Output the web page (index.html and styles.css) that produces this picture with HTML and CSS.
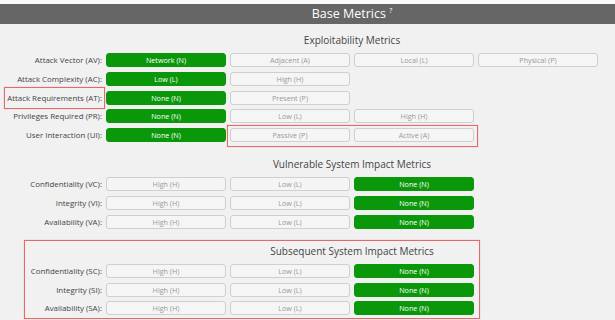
FILE: index.html
```html
<!DOCTYPE html>
<html lang="en">
<head>
  <meta charset="UTF-8" />
  <meta name="viewport" content="width=device-width, initial-scale=1.0" />
  <title>CVSS v4.0 Base Metrics</title>
  <link rel="stylesheet" href="styles.css">
</head>
<body>
  <div class="topbar"></div>
  <header class="head">
    <span class="head-title">Base Metrics <sup>?</sup></span>
  </header>

  <main class="metrics">
    <section class="group">
      <h3 class="group-title">Exploitability Metrics</h3>
      <div class="row">
        <span class="label">Attack Vector (AV):</span>
        <button class="opt on">Network (N)</button>
        <button class="opt">Adjacent (A)</button>
        <button class="opt">Local (L)</button>
        <button class="opt">Physical (P)</button>
      </div>
      <div class="row">
        <span class="label">Attack Complexity (AC):</span>
        <button class="opt on">Low (L)</button>
        <button class="opt">High (H)</button>
      </div>
      <div class="row">
        <span class="label">Attack Requirements (AT):</span>
        <button class="opt on">None (N)</button>
        <button class="opt">Present (P)</button>
      </div>
      <div class="row">
        <span class="label">Privileges Required (PR):</span>
        <button class="opt on">None (N)</button>
        <button class="opt">Low (L)</button>
        <button class="opt">High (H)</button>
      </div>
      <div class="row">
        <span class="label">User Interaction (UI):</span>
        <button class="opt on">None (N)</button>
        <button class="opt">Passive (P)</button>
        <button class="opt">Active (A)</button>
      </div>
    </section>

    <section class="group">
      <h3 class="group-title">Vulnerable System Impact Metrics</h3>
      <div class="row">
        <span class="label">Confidentiality (VC):</span>
        <button class="opt">High (H)</button>
        <button class="opt">Low (L)</button>
        <button class="opt on">None (N)</button>
      </div>
      <div class="row">
        <span class="label">Integrity (VI):</span>
        <button class="opt">High (H)</button>
        <button class="opt">Low (L)</button>
        <button class="opt on">None (N)</button>
      </div>
      <div class="row">
        <span class="label">Availability (VA):</span>
        <button class="opt">High (H)</button>
        <button class="opt">Low (L)</button>
        <button class="opt on">None (N)</button>
      </div>
    </section>

    <section class="group">
      <h3 class="group-title">Subsequent System Impact Metrics</h3>
      <div class="row">
        <span class="label">Confidentiality (SC):</span>
        <button class="opt">High (H)</button>
        <button class="opt">Low (L)</button>
        <button class="opt on">None (N)</button>
      </div>
      <div class="row">
        <span class="label">Integrity (SI):</span>
        <button class="opt">High (H)</button>
        <button class="opt">Low (L)</button>
        <button class="opt on">None (N)</button>
      </div>
      <div class="row">
        <span class="label">Availability (SA):</span>
        <button class="opt">High (H)</button>
        <button class="opt">Low (L)</button>
        <button class="opt on">None (N)</button>
      </div>
    </section>
  </main>

  <!-- red annotation boxes drawn over the form -->
  <div class="mark mark-at"></div>
  <div class="mark mark-ui"></div>
  <div class="mark mark-sub"></div>
</body>
</html>
```

FILE: styles.css
```css
body {
  font-family: 'Open Sans', 'Noto Sans', sans-serif;
  margin: 0;
  padding: 0;
  background: #f1f1f1;
  color: #3a3a3a;
  position: relative;
  min-height: 320px;
}
.topbar {
  height: 4px;
  background: #fafafa;
}
.head {
  height: 20px;
  background: #666666;
  color: #ffffff;
  padding: 0 17px 0 106px;
  text-align: center;
  line-height: 20px;
  font-size: 12.5px;
}
.head sup {
  font-size: 7px;
  vertical-align: 5px;
  line-height: 0;
}
.metrics {
  padding-top: 6px;
}
.group {
  display: flex;
  flex-direction: column;
  gap: 4.8px;
  margin-bottom: 12px;
}
.group-title {
  margin: 0 0 -1.8px 106px;
  width: 492px;
  height: 20px;
  line-height: 20px;
  text-align: center;
  font-size: 10px;
  font-weight: normal;
  color: #444;
}
.row {
  display: grid;
  grid-template-columns: 102px repeat(4, 120px);
  column-gap: 4px;
  align-items: center;
}
.label {
  text-align: right;
  font-size: 7.9px;
  color: #444;
  white-space: nowrap;
}
.opt {
  height: 14px;
  padding: 0;
  border: 1px solid #cfcfcf;
  border-radius: 3px;
  background: #f5f5f5;
  color: #9a9a9a;
  font-family: inherit;
  font-size: 7.2px;
  cursor: pointer;
}
.opt.on {
  background: #0a980a;
  border-color: #0a980a;
  color: #ffffff;
}
.mark {
  position: absolute;
  border: 1px solid #e26a6a;
  box-shadow: 0 0 1px rgba(226, 106, 106, 0.6);
}
.mark-at {
  left: 4px;
  top: 87px;
  width: 99px;
  height: 20px;
}
.mark-ui {
  left: 227px;
  top: 125px;
  width: 249px;
  height: 20px;
}
.mark-sub {
  left: 24px;
  top: 240px;
  width: 454px;
  height: 77px;
}
```
